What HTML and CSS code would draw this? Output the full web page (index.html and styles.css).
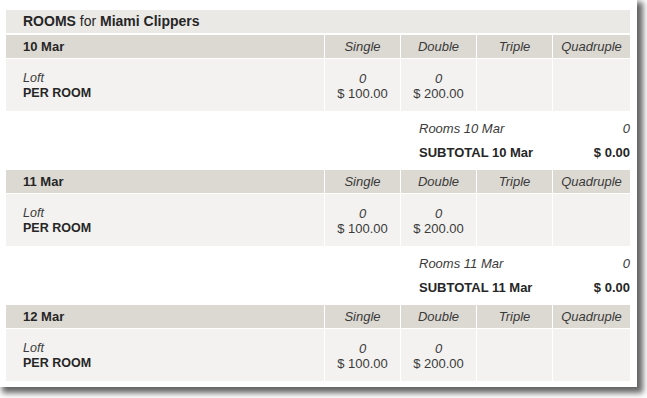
FILE: index.html
```html
<!DOCTYPE html>
<html>
<head>
<meta charset="utf-8">
<link rel="stylesheet" href="styles.css">
</head>
<body>
<div class="page">
<div class="frame">
  <div class="title"><b>ROOMS</b> for <b>Miami Clippers</b></div>

  <div class="day">
    <div class="grid head">
      <div class="cell date">10 Mar</div>
      <div class="cell type">Single</div>
      <div class="cell type">Double</div>
      <div class="cell type">Triple</div>
      <div class="cell type">Quadruple</div>
    </div>
    <div class="grid body">
      <div class="cell room"><i>Loft</i><b>PER ROOM</b></div>
      <div class="cell price"><i>0</i><span>$ 100.00</span></div>
      <div class="cell price"><i>0</i><span>$ 200.00</span></div>
      <div class="cell price"></div>
      <div class="cell price"></div>
    </div>
    <div class="grid summary">
      <div class="label count">Rooms 10 Mar</div>
      <div class="value count">0</div>
      <div class="label total">SUBTOTAL 10 Mar</div>
      <div class="value total">$ 0.00</div>
    </div>
  </div>

  <div class="day">
    <div class="grid head">
      <div class="cell date">11 Mar</div>
      <div class="cell type">Single</div>
      <div class="cell type">Double</div>
      <div class="cell type">Triple</div>
      <div class="cell type">Quadruple</div>
    </div>
    <div class="grid body">
      <div class="cell room"><i>Loft</i><b>PER ROOM</b></div>
      <div class="cell price"><i>0</i><span>$ 100.00</span></div>
      <div class="cell price"><i>0</i><span>$ 200.00</span></div>
      <div class="cell price"></div>
      <div class="cell price"></div>
    </div>
    <div class="grid summary">
      <div class="label count">Rooms 11 Mar</div>
      <div class="value count">0</div>
      <div class="label total">SUBTOTAL 11 Mar</div>
      <div class="value total">$ 0.00</div>
    </div>
  </div>

  <div class="day">
    <div class="grid head">
      <div class="cell date">12 Mar</div>
      <div class="cell type">Single</div>
      <div class="cell type">Double</div>
      <div class="cell type">Triple</div>
      <div class="cell type">Quadruple</div>
    </div>
    <div class="grid body">
      <div class="cell room"><i>Loft</i><b>PER ROOM</b></div>
      <div class="cell price"><i>0</i><span>$ 100.00</span></div>
      <div class="cell price"><i>0</i><span>$ 200.00</span></div>
      <div class="cell price"></div>
      <div class="cell price"></div>
    </div>
  </div>
</div>
</div>
</body>
</html>
```

FILE: styles.css
```css
html, body {
  margin: 0;
  padding: 0;
  background: #ffffff;
}

body {
  width: 647px;
  height: 398px;
  font-family: "Liberation Sans", Arial, sans-serif;
  color: #333333;
}

.page {
  width: 647px;
  height: 398px;
  padding: 0;
}

.frame {
  width: 624px;
  padding: 10px 7px 6px 6px;
  background: #ffffff;
  box-shadow: 4px 4px 6px 2px #646464;
}

.title {
  height: 23px;
  line-height: 23px;
  padding-left: 17px;
  margin-bottom: 2px;
  background: #ebe9e5;
  font-size: 14px;
  color: #262626;
}

.grid {
  display: grid;
  grid-template-columns: 318px 75px 75px 75px 77px;
  column-gap: 1px;
}

.head {
  height: 23px;
  margin-bottom: 1px;
}

.head .cell {
  background: #dcd9d2;
  line-height: 23px;
  font-size: 13px;
}

.date {
  padding-left: 17px;
  font-weight: bold;
  color: #262626;
}

.type {
  text-align: center;
  font-style: italic;
  color: #3a3a3a;
}

.body {
  height: 52px;
}

.body .cell {
  background: #f3f2f0;
  display: flex;
  flex-direction: column;
  justify-content: center;
  padding-top: 1px;
  box-sizing: border-box;
  font-size: 12.5px;
  line-height: 15px;
}

.room {
  padding-left: 17px;
}

.room i {
  color: #3a3a3a;
}

.room b {
  color: #262626;
}

.body .price {
  align-items: center;
  color: #3a3a3a;
  font-size: 13px;
}

.summary {
  height: 59px;
  padding-top: 5px;
  box-sizing: border-box;
  grid-auto-rows: 24px;
  font-size: 13px;
  align-items: center;
}

.label {
  grid-column: 3 / 5;
  padding-left: 18px;
}

.value {
  grid-column: 5;
  text-align: right;
}

.count {
  font-style: italic;
  color: #3a3a3a;
}

.total {
  font-weight: bold;
  color: #262626;
}
```
